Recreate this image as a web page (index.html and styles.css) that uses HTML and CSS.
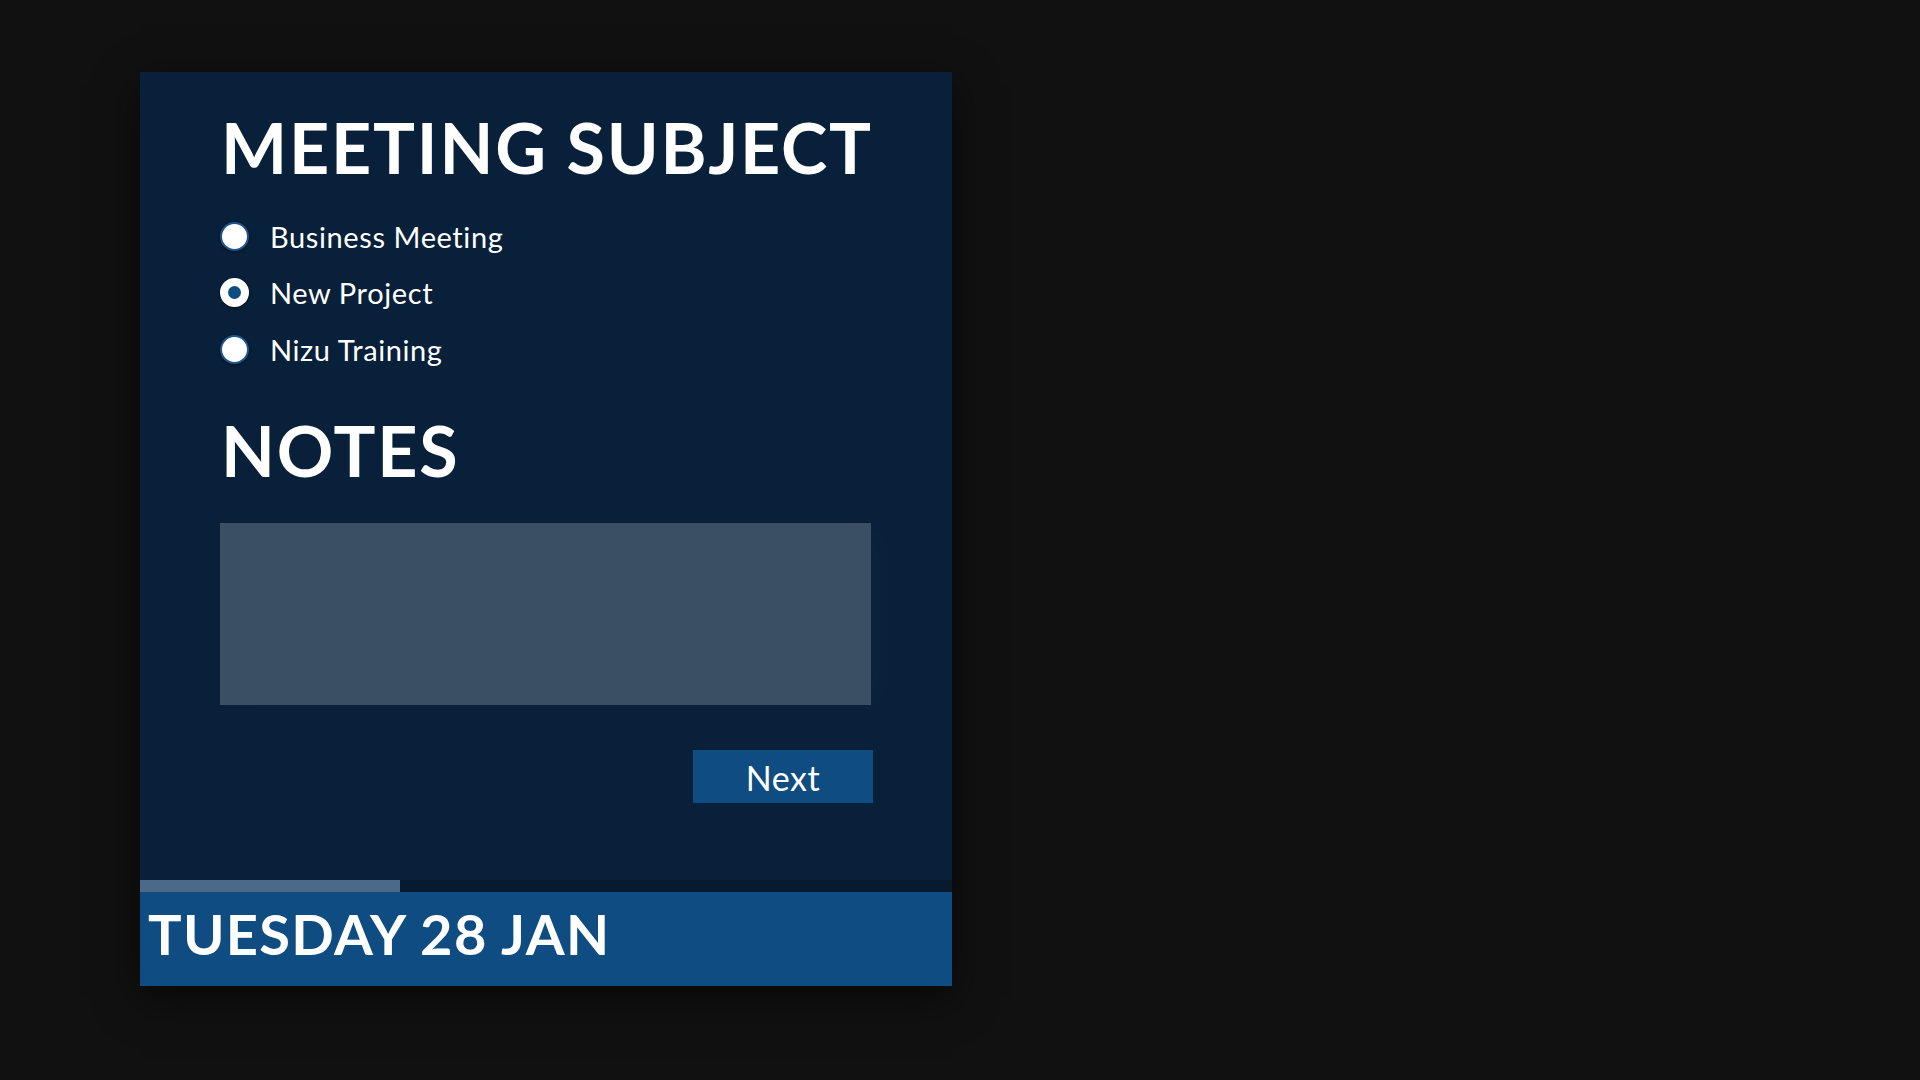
FILE: index.html
```html
<!DOCTYPE html>
<html lang="en">
<head>
<meta charset="utf-8">
<title>Meeting Subject</title>
<link rel="stylesheet" href="styles.css">
</head>
<body>
  <div class="panel">
    <div class="content">
      <h1 class="title">MEETING SUBJECT</h1>
      <ul class="options">
        <li class="option"><span class="radio"></span><span class="label">Business Meeting</span></li>
        <li class="option"><span class="radio checked"></span><span class="label">New Project</span></li>
        <li class="option"><span class="radio"></span><span class="label">Nizu Training</span></li>
      </ul>
      <h2 class="title notes-title">NOTES</h2>
      <div class="notes"></div>
      <div class="actions"><button class="next">Next</button></div>
    </div>
    <div class="progress"><div class="progress-fill" style="width: 32%"></div></div>
    <div class="date">TUESDAY 28 JAN</div>
  </div>
</body>
</html>
```

FILE: styles.css
```css
html, body {
  margin: 0;
  padding: 0;
}
body {
  background: #111111;
  font-family: "Lato", "Liberation Sans", sans-serif;
  color: #ffffff;
  padding: 72px 0 0 140px;
  height: 1080px;
  box-sizing: border-box;
}
.panel {
  width: 812px;
  height: 914px;
  background: #082039;
  display: flex;
  flex-direction: column;
  box-shadow: 0 12px 40px rgba(0, 0, 0, 0.55);
}
.content {
  flex: 1;
  padding: 40px 79px 0 80px;
  display: flex;
  flex-direction: column;
}
.title {
  margin: 0;
  font-size: 70px;
  line-height: 70px;
  font-weight: 700;
  letter-spacing: 1.8px;
  padding-left: 1px;
  white-space: nowrap;
}
.options {
  list-style: none;
  margin: 26px 0 0 0;
  padding: 0;
}
.option {
  height: 56.5px;
  display: flex;
  align-items: center;
}
.radio {
  width: 29px;
  height: 29px;
  box-sizing: border-box;
  border-radius: 50%;
  background: #ffffff;
  border: 2px solid #1d568c;
  box-shadow: 0 1px 3px rgba(0, 0, 0, 0.55);
  display: flex;
  align-items: center;
  justify-content: center;
  flex: none;
}
.radio.checked {
  border-color: #ffffff;
}
.radio.checked::after {
  content: "";
  width: 13px;
  height: 13px;
  border-radius: 50%;
  background: #0f4c81;
}
.label {
  margin-left: 21px;
  font-size: 29px;
  font-weight: 400;
  letter-spacing: 0.6px;
}
.notes-title {
  margin-top: 37px;
}
.notes {
  margin-top: 38px;
  height: 182px;
  width: 651px;
  background: #3a4f64;
  box-shadow: 18px 4px 30px rgba(255, 255, 255, 0.015);
}
.actions {
  margin-top: 45px;
  display: flex;
  justify-content: flex-end;
}
.next {
  width: 180px;
  height: 53px;
  border: 0;
  background: #0f4c81;
  color: #ffffff;
  font-family: "Lato", "Liberation Sans", sans-serif;
  font-size: 34px;
  font-weight: 400;
  letter-spacing: 0.6px;
  padding: 2px 0 0 0;
}
.progress {
  height: 12px;
  background: #061a30;
  flex: none;
}
.progress-fill {
  height: 100%;
  background: #4a6a88;
}
.date {
  flex: none;
  height: 94px;
  box-sizing: border-box;
  background: #0f4c81;
  padding: 14px 0 0 8px;
  font-size: 56px;
  line-height: 56px;
  font-weight: 700;
  letter-spacing: 1.3px;
  white-space: nowrap;
}
```
